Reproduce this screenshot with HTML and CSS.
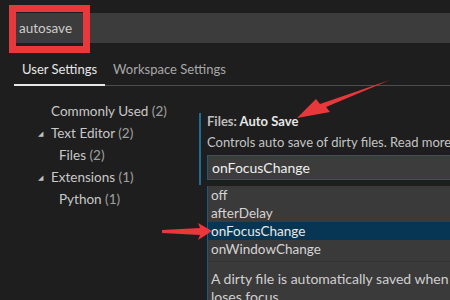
FILE: index.html
```html
<!DOCTYPE html>
<html lang="en">
<head>
	<meta charset="UTF-8">
	<title>Settings</title>
	<link rel="stylesheet" href="styles.css">
</head>
<body>
	<div class="search">
		<div class="search-input">autosave</div>
	</div>

	<div class="tabs">
		<div class="tab active">User Settings</div>
		<div class="tab">Workspace Settings</div>
	</div>

	<div class="main">
		<ul class="toc">
			<li>Commonly Used <span class="count">(2)</span></li>
			<li class="group"><span class="twisty">&#9698;</span>Text Editor <span class="count">(2)</span></li>
			<li class="sub">Files <span class="count">(2)</span></li>
			<li class="group"><span class="twisty">&#9698;</span>Extensions <span class="count">(1)</span></li>
			<li class="sub">Python <span class="count">(1)</span></li>
		</ul>

		<div class="setting">
			<div class="setting-title"><span class="category">Files:</span> Auto Save</div>
			<div class="setting-desc">Controls auto save of dirty files. Read more</div>
			<div class="select">onFocusChange</div>

			<div class="dropdown">
				<div class="option">off</div>
				<div class="option">afterDelay</div>
				<div class="option selected">onFocusChange</div>
				<div class="option">onWindowChange</div>
				<div class="option-desc">A dirty file is automatically saved when the editor<br>loses focus.</div>
			</div>
		</div>
	</div>

	<!-- annotations drawn on top of the screenshot -->
	<div class="mark-box"></div>
	<svg class="arrows" width="450" height="300" viewBox="0 0 450 300">
		<polygon points="390,80 326,107 330,112 297,118 316,99 320,104" fill="#e8383b"/>
		<polygon points="162,230 200,228 198,223 212,231 198,240 200,235 162,233" fill="#e8383b"/>
	</svg>
</body>
</html>
```

FILE: styles.css
```css
body {
	margin: 0;
	width: 450px;
	height: 300px;
	overflow: hidden;
	position: relative;
	background-color: #1e1e1e;
	color: #cccccc;
	font-family: 'Lato', sans-serif;
	font-size: 13px;
}

.search {
	padding: 13px 0 0 16px;
}

.search-input {
	height: 30px;
	line-height: 30px;
	padding-left: 3px;
	background-color: #3c3c3c;
	color: #cccccc;
	font-size: 13.5px;
}

.tabs {
	display: flex;
	margin: 11px 0 0 14px;
	border-bottom: 1px solid #4e4e4e;
}

.tab {
	padding: 0 8px;
	height: 31px;
	line-height: 30px;
	color: #a8a8a8;
}

.tab.active {
	color: #e7e7e7;
	box-shadow: inset 0 -2px 0 #e7e7e7;
	margin-bottom: -1px;
	height: 32px;
}

.main {
	display: flex;
	padding-top: 14px;
}

.toc {
	list-style: none;
	margin: 0;
	padding: 0 0 0 51px;
	width: 148px;
	flex-shrink: 0;
	font-size: 13.5px;
}

.toc li {
	height: 22px;
	line-height: 22px;
	white-space: nowrap;
	color: #c8c8c8;
}

.toc .group {
	margin-left: -13px;
}

.toc .sub {
	padding-left: 8px;
}

.twisty {
	display: inline-block;
	width: 13px;
	font-size: 7px;
	vertical-align: 2px;
	color: #c0c0c0;
}

.count {
	color: #a0a0a0;
}

.setting {
	position: relative;
	margin-top: 13px;
	padding-left: 6px;
	border-left: 2px solid #1f6c97;
	flex: 1;
	min-width: 0;
	height: 72px;
}

.setting-title {
	font-weight: bold;
	color: #e7e7e7;
	line-height: 16px;
}

.category {
	color: #bdbdbd;
}

.setting-desc {
	margin-top: 5px;
	line-height: 17px;
	white-space: nowrap;
	color: #c4c4c4;
}

.select {
	margin-top: 4px;
	height: 23px;
	line-height: 23px;
	padding-left: 4px;
	background-color: #3c3c3c;
	border: 1px solid #1c5a82;
	border-right: none;
	color: #f0f0f0;
	font-size: 14px;
}

.dropdown {
	position: absolute;
	left: 6px;
	top: 73px;
	width: 300px;
	background-color: #3a3a3a;
	border-left: 1px solid #1c5a82;
	font-size: 13.5px;
}

.option {
	height: 18px;
	line-height: 18px;
	padding-left: 3px;
	color: #d4d4d4;
}

.option.selected {
	background-color: #073655;
	color: #e8e8e8;
}

.option-desc {
	margin-top: 3px;
	padding: 8px 0 10px 3px;
	border-top: 1px solid #333;
	line-height: 18px;
	white-space: nowrap;
	color: #d0d0d0;
	font-size: 14px;
}

.mark-box {
	position: absolute;
	left: 9px;
	top: 5px;
	width: 67px;
	height: 34px;
	border: 7px solid #e8383b;
}

.arrows {
	position: absolute;
	left: 0;
	top: 0;
}
```
